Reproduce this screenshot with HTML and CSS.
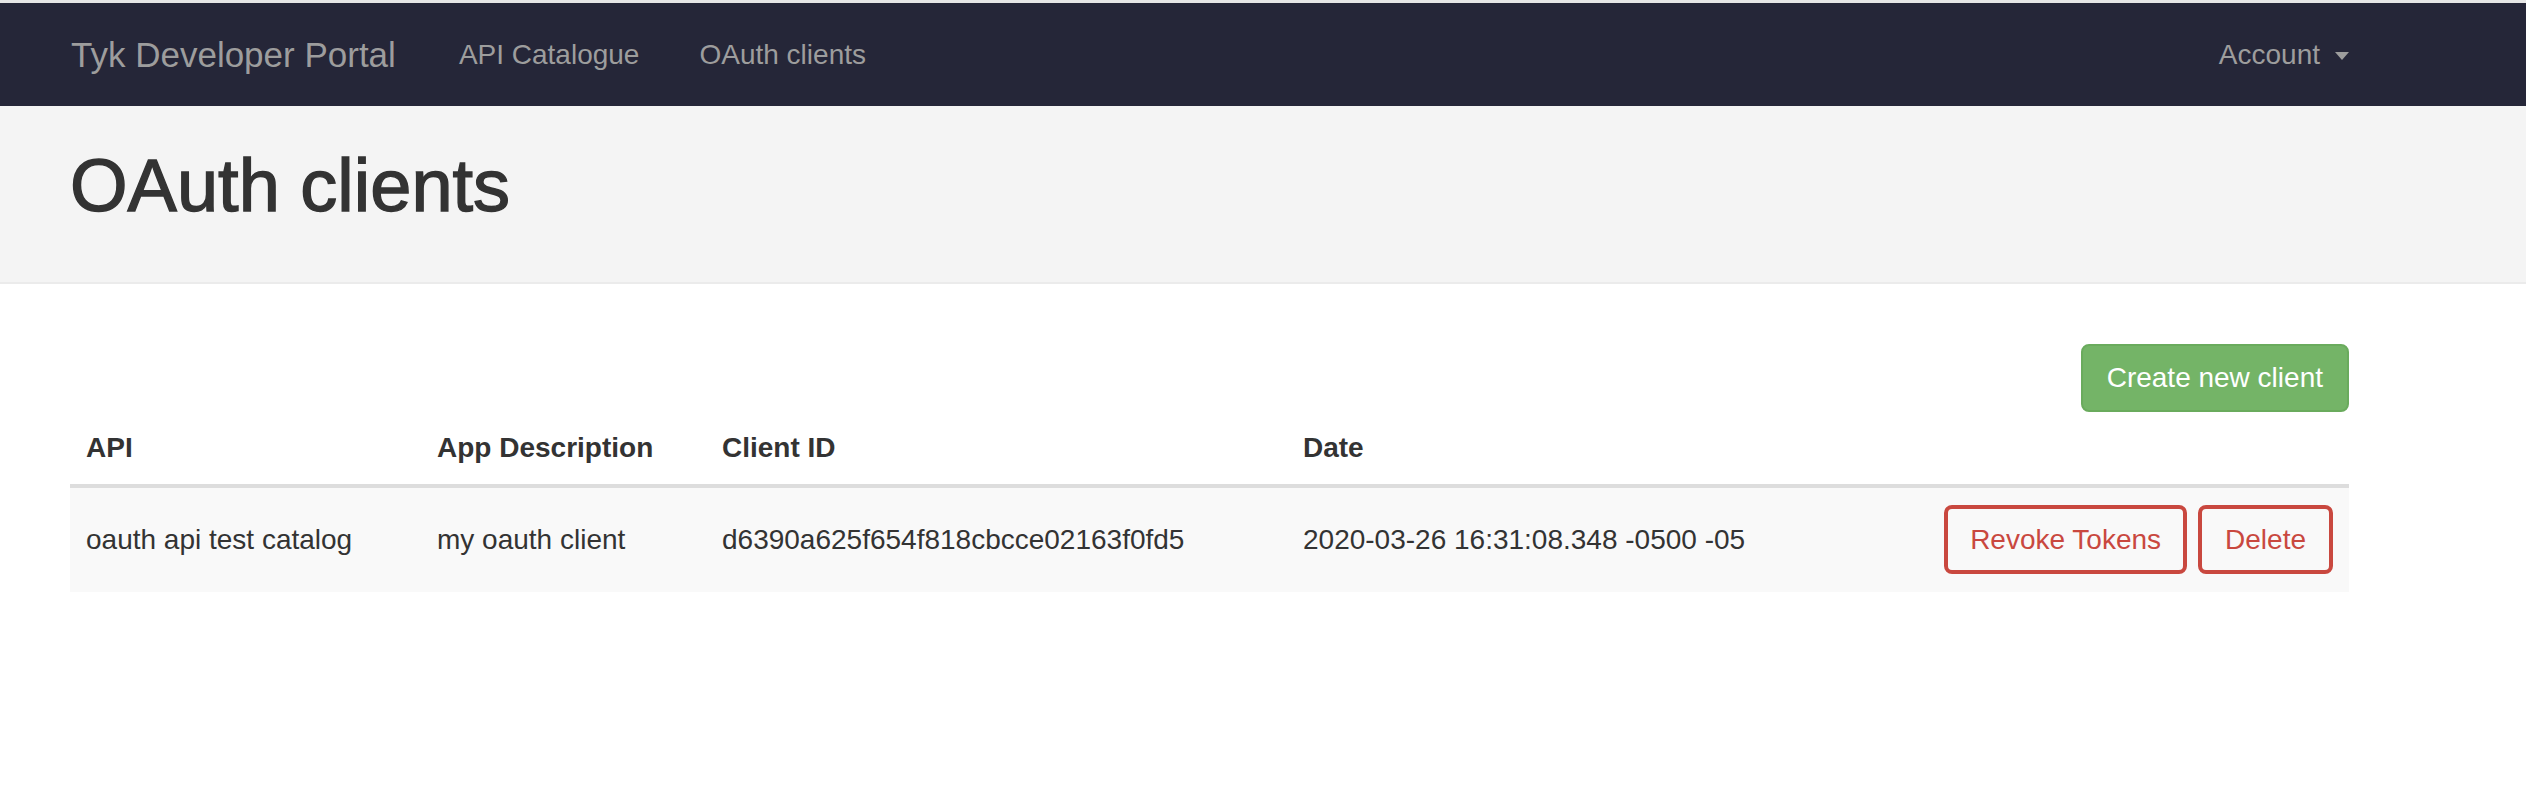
FILE: index.html
```html
<!DOCTYPE html>
<html lang="en">
<head>
<meta charset="utf-8">
<title>OAuth clients - Tyk Developer Portal</title>
<link rel="stylesheet" href="styles.css">
</head>
<body>
<div class="topstrip"></div>
<nav class="navbar">
  <div class="container navbar-inner">
    <a class="brand" href="#">Tyk Developer Portal</a>
    <ul class="nav">
      <li><a href="#">API Catalogue</a></li>
      <li><a href="#">OAuth clients</a></li>
    </ul>
    <div class="nav-right">
      <a href="#" class="dropdown-toggle">Account<span class="caret"></span></a>
    </div>
  </div>
</nav>
<header class="jumbotron">
  <div class="container">
    <h1>OAuth clients</h1>
  </div>
</header>
<main class="container">
  <div class="toolbar">
    <button class="btn btn-success" type="button">Create new client</button>
  </div>
  <table class="table">
    <colgroup>
      <col class="c-api">
      <col class="c-desc">
      <col class="c-id">
      <col class="c-date">
      <col class="c-actions">
    </colgroup>
    <thead>
      <tr>
        <th>API</th>
        <th>App Description</th>
        <th>Client ID</th>
        <th>Date</th>
        <th></th>
      </tr>
    </thead>
    <tbody>
      <tr>
        <td>oauth api test catalog</td>
        <td>my oauth client</td>
        <td>d6390a625f654f818cbcce02163f0fd5</td>
        <td>2020-03-26 16:31:08.348 -0500 -05</td>
        <td class="actions">
          <div class="action-group">
            <button class="btn btn-outline-danger btn-wide" type="button">Revoke Tokens</button>
            <button class="btn btn-outline-danger" type="button">Delete</button>
          </div>
        </td>
      </tr>
    </tbody>
  </table>
</main>
</body>
</html>
```

FILE: styles.css
```css
* {
  box-sizing: border-box;
}

html, body {
  margin: 0;
  padding: 0;
  background: #ffffff;
}

body {
  font-family: "Liberation Sans", Arial, Helvetica, sans-serif;
  font-size: 28px;
  line-height: 40px;
  color: #333333;
}

a {
  text-decoration: none;
}

.container {
  width: 2279px;
  margin-left: 70px;
}

.topstrip {
  height: 3px;
  background: #e6e6e6;
}

/* Navbar */
.navbar {
  background: #252638;
  height: 103px;
}

.navbar-inner {
  height: 100%;
  display: flex;
  align-items: center;
}

.brand {
  font-size: 35px;
  line-height: 40px;
  color: #9d9d9d;
  margin-left: 1px;
}

.nav {
  list-style: none;
  margin: 0 0 0 33px;
  padding: 0;
  display: flex;
}

.nav li a {
  display: block;
  padding: 0 30px;
  font-size: 28px;
  line-height: 40px;
  color: #9d9d9d;
}

.nav-right {
  margin-left: auto;
}

.dropdown-toggle {
  display: flex;
  align-items: center;
  font-size: 28px;
  line-height: 40px;
  color: #9d9d9d;
}

.caret {
  display: inline-block;
  width: 0;
  height: 0;
  margin-left: 15px;
  margin-top: 2px;
  border-top: 8px solid #9d9d9d;
  border-left: 7px solid transparent;
  border-right: 7px solid transparent;
}

/* Jumbotron */
.jumbotron {
  background: #f4f4f4;
  border-bottom: 2px solid #ebebeb;
  padding: 39px 0 56px;
}

.jumbotron h1 {
  margin: 0;
  font-size: 74px;
  line-height: 81px;
  font-weight: 400;
  color: #333333;
  -webkit-text-stroke: 1.4px #333333;
}

/* Toolbar */
.toolbar {
  display: flex;
  justify-content: flex-end;
  margin-top: 60px;
}

.btn {
  font-family: inherit;
  font-size: 28px;
  cursor: pointer;
  white-space: nowrap;
}

.btn-success {
  background: #74b467;
  border: 2px solid #6aab5d;
  color: #ffffff;
  border-radius: 8px;
  padding: 12px 24px;
  line-height: 40px;
  height: 68px;
}

.btn-outline-danger {
  background: transparent;
  border: 4px solid #c9483f;
  color: #c9483f;
  border-radius: 8px;
  padding: 0 23px;
  height: 69px;
  line-height: 61px;
}

.btn-wide {
  padding: 0 22px;
}

/* Table */
.table {
  width: 2279px;
  border-collapse: collapse;
  table-layout: fixed;
}

.c-api { width: 351px; }
.c-desc { width: 285px; }
.c-id { width: 581px; }
.c-date { width: 640px; }
.c-actions { width: 422px; }

.table th {
  text-align: left;
  font-weight: 700;
  padding: 16px 16px;
  line-height: 40px;
  border-bottom: 4px solid #dddddd;
}

.table td {
  padding: 17px 16px 18px;
  line-height: 40px;
  vertical-align: middle;
  background: #f9f9f9;
  white-space: nowrap;
}

.action-group {
  display: flex;
  justify-content: flex-end;
  gap: 11px;
}
```
